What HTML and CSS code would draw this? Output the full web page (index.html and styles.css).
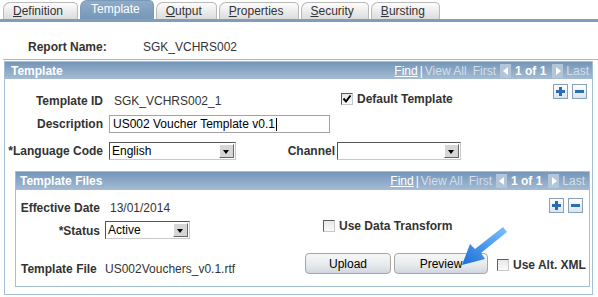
FILE: index.html
```html
<!DOCTYPE html>
<html>
  <head>
    <meta charset="utf-8">
    <title>Template</title>
    <link rel="stylesheet" href="styles.css">
  </head>
  <body>
    <div class="page">
      <div class="tabs">
        <div class="tab"><u>D</u>efinition</div>
        <div class="tab active">Template</div>
        <div class="tab"><u>O</u>utput</div>
        <div class="tab"><u>P</u>roperties</div>
        <div class="tab"><u>S</u>ecurity</div>
        <div class="tab"><u>B</u>ursting</div>
      </div>

      <div class="report">
        <span class="report-lbl">Report Name:</span>
        <span class="val">SGK_VCHRS002</span>
      </div>

      <div class="box outer">
        <div class="hdr">
          <span class="title">Template</span>
          <span class="nav">
            <u class="find">Find</u><span class="sep">|</span><span class="dim">View All</span><span class="dim first">First</span><span class="arr left"></span><b class="count">1 of 1</b><span class="arr right"></span><span class="dim">Last</span>
          </span>
        </div>

        <div class="row r-id">
          <span class="lbl">Template ID</span>
          <span class="val id-val">SGK_VCHRS002_1</span>
          <span class="chk-group">
            <span class="chk on"><svg width="10" height="10" viewBox="0 0 10 10"><path d="M1.5 4.5 L4 7.5 L8.5 1.5" fill="none" stroke="#000" stroke-width="2"/></svg></span>
            <b class="chk-lbl">Default Template</b>
          </span>
          <span class="pm"><span class="pm-btn plus"></span><span class="pm-btn minus"></span></span>
        </div>

        <div class="row r-desc">
          <span class="lbl">Description</span>
          <span class="input">US002 Voucher Template v0.1<span class="caret"></span></span>
        </div>

        <div class="row r-lang">
          <span class="lbl">*Language Code</span>
          <span class="sel lang"><span class="sel-txt">English</span><span class="dd"></span></span>
          <span class="lbl ch-lbl">Channel</span>
          <span class="sel channel"><span class="sel-txt"></span><span class="dd"></span></span>
        </div>

        <div class="box inner">
          <div class="hdr">
            <span class="title">Template Files</span>
            <span class="nav">
              <u class="find">Find</u><span class="sep">|</span><span class="dim">View All</span><span class="dim first">First</span><span class="arr left"></span><b class="count">1 of 1</b><span class="arr right"></span><span class="dim">Last</span>
            </span>
          </div>

          <div class="row r-eff">
            <span class="lbl">Effective Date</span>
            <span class="val">13/01/2014</span>
            <span class="pm"><span class="pm-btn plus"></span><span class="pm-btn minus"></span></span>
          </div>

          <div class="row r-status">
            <span class="lbl">*Status</span>
            <span class="sel status"><span class="sel-txt">Active</span><span class="dd"></span></span>
            <span class="chk-group">
              <span class="chk"></span>
              <b class="chk-lbl">Use Data Transform</b>
            </span>
          </div>

          <div class="row r-file">
            <span class="lbl lbl-left">Template File</span>
            <span class="val file-val">US002Vouchers_v0.1.rtf</span>
            <button class="btn upload">Upload</button>
            <button class="btn preview">Preview</button>
            <span class="chk"></span>
            <b class="chk-lbl">Use Alt. XML</b>
          </div>
        </div>
      </div>

      <svg class="pointer" width="60" height="50" viewBox="0 0 60 50">
        <defs>
          <linearGradient id="ag" x1="1" y1="0" x2="0" y2="1">
            <stop offset="0" stop-color="#7cc0ff"/>
            <stop offset="1" stop-color="#1b6fd8"/>
          </linearGradient>
        </defs>
        <path d="M46 2 L50 7 L24 28 L28 34 L5 40 L13 19 L18 24 Z" fill="url(#ag)"/>
      </svg>
    </div>
  </body>
</html>
```

FILE: styles.css
```css
body {
  margin: 0;
  font: 12px/14px "Liberation Sans", Arial, sans-serif;
  color: #333;
  background: #fff;
}

.page {
  position: relative;
  width: 598px;
  height: 297px;
  overflow: hidden;
}

/* tabs */
.tabs {
  display: flex;
  align-items: flex-end;
  gap: 2px;
  height: 19px;
  padding-left: 3px;
  border-bottom: 3px solid #7f9dbd;
}
.tab {
  height: 16px;
  line-height: 16px;
  padding: 0 14px 0 9px;
  border: 1px solid #b9b9b9;
  border-bottom: 0;
  border-radius: 7px 5px 0 0;
  background: linear-gradient(#fdfdfd, #dcdcdc);
  color: #333;
}
.tab.active {
  height: 18px;
  line-height: 17px;
  padding: 0 13px 0 10px;
  background: linear-gradient(#8eabc8, #7697b8);
  border-color: #7b9aba;
  color: #fff;
}

.report {
  display: flex;
  margin-left: 3px;
  padding: 18px 0 5px 25px;
  border-bottom: 1px solid #b4b4b4;
}
.report-lbl {
  width: 115px;
  font-weight: bold;
}

/* boxes */
.box { border: 1px solid #a4bfd9; }
.outer {
  margin: 1px 5px 0 4px;
  padding-bottom: 7px;
}
.inner {
  margin: 11px 2px 0 10px;
  padding-bottom: 10px;
}

.hdr {
  display: flex;
  align-items: center;
  justify-content: space-between;
  height: 17px;
  padding: 0 3px 0 6px;
  background: linear-gradient(#7496b8, #a5bcd4);
}
.inner .hdr { height: 18px; padding: 0 4px 0 4px; }
.title {
  color: #fff;
  font-weight: bold;
}
.nav {
  display: flex;
  align-items: center;
  color: #fff;
}
.find { color: #fff; }
.sep { margin: 0 2px; }
.dim { color: #d3dfeb; }
.first { margin-left: 6px; }
.count { margin: 0 6px 0 4px; color: #fff; }
.arr {
  position: relative;
  width: 11px;
  height: 14px;
  margin-left: 4px;
  background: #b2c5d9;
}
.arr.right { margin: 0 3px 0 0; }
.arr::after {
  content: "";
  position: absolute;
  top: 3px;
  border: 4px solid transparent;
}
.arr.left::after { left: -1px; border-right: 5px solid #fff; }
.arr.right::after { left: 4px; border-left: 5px solid #fff; }

/* rows */
.row {
  display: flex;
  align-items: flex-start;
}
.lbl {
  flex: none;
  width: 98px;
  margin-right: 6px;
  text-align: right;
  font-weight: bold;
}
.val { color: #333; }

.r-id { padding: 5px 5px 0 0; }
.r-id .lbl, .r-id .val { margin-top: 10px; }
.id-val { width: 227px; padding-left: 5px; }
.chk-group { display: flex; align-items: center; margin-top: 8px; }
.chk-lbl { margin-left: 4px; font-weight: bold; }
.pm { display: flex; gap: 4px; margin-left: auto; }
.pm-btn {
  position: relative;
  width: 13px;
  height: 13px;
  border: 1px solid #86a1bc;
  background: linear-gradient(#ffffff, #dbe4ee);
}
.pm-btn::before, .pm-btn.plus::after {
  content: "";
  position: absolute;
  left: 2px;
  top: 5px;
  width: 9px;
  height: 3px;
  background: #2c6cb2;
}
.pm-btn.plus::after { left: 5px; top: 2px; width: 3px; height: 9px; }

.chk {
  flex: none;
  display: flex;
  align-items: center;
  justify-content: center;
  width: 10px;
  height: 10px;
  border: 1px solid;
  border-color: #5c5c5c #c8c8c8 #c8c8c8 #5c5c5c;
  background: linear-gradient(#e8e8e8, #fafafa);
}

.r-desc { margin-top: 7px; }
.r-desc .lbl, .r-lang .lbl { line-height: 18px; }
.input {
  display: flex;
  align-items: center;
  width: 216px;
  height: 16px;
  padding-left: 3px;
  border: 1px solid #a3a3a3;
  color: #000;
}
.caret {
  width: 0;
  height: 13px;
  margin-left: 1px;
  border-left: 1px solid #000;
}

.r-lang { margin-top: 9px; }
.sel {
  display: flex;
  height: 16px;
  border: 1px solid;
  border-color: #555 #c9c9c9 #c9c9c9 #555;
  background: #fff;
  color: #000;
}
.sel-txt { flex: 1; padding-left: 2px; line-height: 16px; }
.dd {
  position: relative;
  width: 13px;
  margin: 1px;
  border: 1px solid;
  border-color: #fff #666 #666 #fff;
  background: #d6d6d6;
}
.dd::after {
  content: "";
  position: absolute;
  left: 3px;
  top: 5px;
  border: 3px solid transparent;
  border-top: 4px solid #000;
}
.lang { width: 125px; }
.ch-lbl { width: 99px; margin: 0 2px 0 0; }
.channel { width: 122px; }

/* inner rows */
.inner .lbl { width: 84px; margin-right: 5px; }
.r-eff { padding: 8px 6px 0 0; }
.r-eff .lbl, .r-eff .val { margin-top: 3px; }
.r-eff .val { padding-left: 5px; }

.r-status { margin-top: 4px; }
.r-status .lbl { margin-top: 3px; line-height: 18px; }
.r-status .sel { margin-top: 2px; }
.status { width: 83px; }
.r-status .chk-group { margin: 0 0 0 133px; }

.r-file { margin-top: 13px; }
.inner .lbl-left { width: 79px; padding-left: 5px; text-align: left; margin-top: 9px; }
.file-val { width: 200px; margin-top: 9px; }
.btn {
  height: 21px;
  padding: 0;
  border: 1px solid #a6a6a6;
  border-radius: 4px;
  background: linear-gradient(#f7f7f7, #e6e9ec 60%, #cfd6dd);
  font: 12px "Liberation Sans", Arial, sans-serif;
  color: #000;
}
.upload { width: 86px; }
.preview { width: 94px; margin-left: 3px; }
.r-file .chk { margin: 6px 0 0 9px; }
.r-file .chk-lbl { margin: 5px 0 0 4px; }

/* annotation arrow */
.pointer {
  position: absolute;
  left: 457px;
  top: 225px;
}
```
